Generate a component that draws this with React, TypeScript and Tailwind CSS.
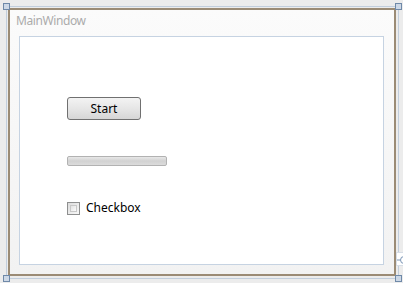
import React from "react";

const Handle = ({ cls }: { cls: string }) => (
  <div className={`absolute w-[7px] h-[7px] border border-[#6f89a8] bg-[#cdd8e6] ${cls}`} />
);

export default function App() {
  return (
    <div
      className="relative w-[403px] h-[283px] overflow-hidden bg-[#ececec] pt-[8px] pl-[8px]"
      style={{ fontFamily: '"Segoe UI", "Noto Sans", sans-serif' }}
    >
      {/* selection outline */}
      <div className="absolute left-[6px] top-[6px] w-[393px] h-[273px] border border-[#c2cedc]" />
      <div className="relative w-[388px] h-[268px] border-2 border-[#9b8b75] bg-gradient-to-b from-[#fbfbfb] to-[#f2f2f2] flex flex-col">
        <div className="pl-[6px] pt-[3px] h-[26px] text-[12px] leading-[16px] tracking-[-0.4px] text-[#ababab]">MainWindow</div>
        <div className="ml-[9px] w-[365px] h-[229px] border border-[#c6d3e2] bg-white flex flex-col items-start pl-[47px] pt-[60px]">
          <button className="w-[74px] h-[23px] rounded-[3px] border border-[#707070] bg-gradient-to-b from-[#f3f3f3] via-[#e6e6e6] to-[#d6d6d6] text-[12px] text-black flex items-center justify-center">
            Start
          </button>
          <div className="mt-[36px] w-[100px] h-[10px] rounded-[2px] border border-[#b2b2b2] bg-gradient-to-b from-[#e8e8e8] via-[#d2d2d2] to-[#dcdcdc]" />
          <div className="mt-[34px] flex items-center gap-[6px]">
            <div className="w-[13px] h-[13px] border border-[#8e8f8f] bg-gradient-to-br from-[#dcdcdc] to-[#f8f8f8] p-[2px]">
              <div className="w-full h-full border border-[#c8c8c8] bg-gradient-to-br from-[#e2e2e2] to-[#fbfbfb]" />
            </div>
            <span className="text-[12px] leading-[16px] text-black">Checkbox</span>
          </div>
        </div>
      </div>
      <Handle cls="left-[3px] top-[3px]" />
      <Handle cls="left-[395px] top-[3px]" />
      <Handle cls="left-[3px] top-[275px]" />
      <Handle cls="left-[395px] top-[275px]" />
      {/* grid adorner */}
      <div className="absolute left-[396px] top-[252px] w-[12px] h-[14px] border border-[#d8dee6] bg-white">
        <svg width="12" height="14" viewBox="0 0 12 14" className="absolute left-0 top-0">
          <line x1="0" y1="7" x2="3" y2="7" stroke="#7a94b4" strokeWidth="1" />
          <circle cx="7" cy="7" r="3.5" fill="none" stroke="#7a94b4" strokeWidth="1" />
        </svg>
      </div>
    </div>
  );
}
